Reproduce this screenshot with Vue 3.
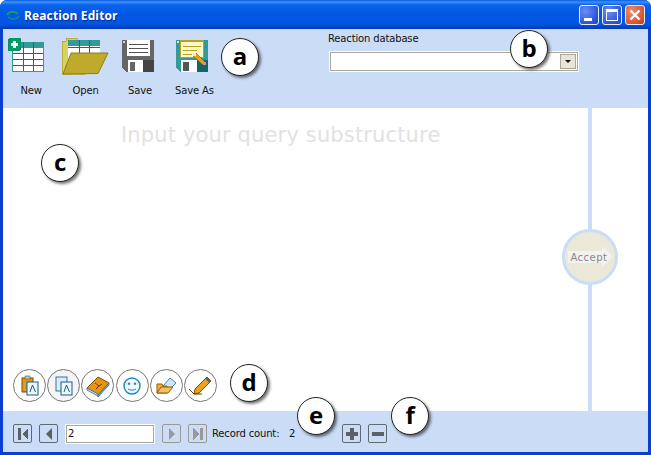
<script setup>
const callouts = [
  { letter: 'a', x: 240, y: 57 },
  { letter: 'b', x: 529, y: 49 },
  { letter: 'c', x: 60, y: 163 },
  { letter: 'd', x: 249, y: 383 },
  { letter: 'e', x: 316, y: 416 },
  { letter: 'f', x: 410, y: 416 }
]
const calloutStyle = (c) => ({ left: c.x - 19 + 'px', top: c.y - 19 + 'px' })
</script>

<template>
  <div class="window">
    <header class="titlebar">
      <svg class="app-icon" width="14" height="12" viewBox="0 0 14 12">
        <path d="M1 5C3 1 9 1 12 4" fill="none" stroke="#19a05a" stroke-width="1.6" />
        <path d="M2 7C5 10 10 10 13 6" fill="none" stroke="#0c8c9c" stroke-width="1.6" />
      </svg>
      <span class="title">Reaction Editor</span>
      <div class="win-buttons">
        <div class="win-btn"><span class="glyph-min"></span></div>
        <div class="win-btn"><span class="glyph-max"></span></div>
        <div class="win-btn close">
          <svg width="12" height="12" viewBox="0 0 12 12"><path d="M1.5 1.5L10.5 10.5M10.5 1.5L1.5 10.5" stroke="#fff" stroke-width="2.4" /></svg>
        </div>
      </div>
    </header>

    <div class="client">
      <section class="toolbar">
        <div class="tools">
          <div class="tool">
            <svg width="54" height="44" viewBox="4 34 54 44" shape-rendering="crispEdges">
              <rect x="12" y="42" width="32" height="30" fill="#339999" />
              <rect x="13" y="48" width="30" height="23" fill="#fff" />
              <path d="M13 53.5H43M13 59.5H43M13 65.5H43M23.5 48V71M33.5 48V71M23.5 42V48M33.5 42V48" stroke="#555" stroke-width="1" />
              <rect x="8" y="38" width="13" height="13" rx="2" fill="#009966" />
              <path d="M13 41H16V43H18V46H16V48H13V46H11V43H13Z" fill="#fff" />
            </svg>
            <span>New</span>
          </div>
          <div class="tool">
            <svg width="54" height="44" viewBox="58 34 54 44" shape-rendering="crispEdges">
              <path d="M61 41H65V38H76V41H84V74H61Z" fill="#d8d060" stroke="#a89a20" stroke-width="0.6" />
              <rect x="67" y="40" width="32" height="24" fill="#fff" />
              <rect x="67" y="40" width="32" height="6" fill="#339999" />
              <path d="M78.5 40V54M88.5 40V54M67 47H99" stroke="#555" stroke-width="1" />
              <path d="M62 74L70 53H107L97 73.5Z" fill="#c0aa2c" stroke="#8d7c14" stroke-width="1" shape-rendering="auto" />
            </svg>
            <span>Open</span>
          </div>
          <div class="tool">
            <svg width="54" height="44" viewBox="113 34 54 44" shape-rendering="crispEdges">
              <path d="M122 40H154V72H126L122 68Z" fill="#666" />
              <rect x="123" y="41" width="2" height="2" fill="#cfd8e8" />
              <rect x="127" y="40" width="23" height="16" fill="#fff" />
              <path d="M129 44.5H148M129 48.5H148M129 52.5H148" stroke="#555" stroke-width="1" />
              <rect x="128" y="60" width="21" height="12" fill="#fff" />
              <rect x="130" y="62" width="5" height="9" fill="#666" />
              <rect x="143" y="60" width="11" height="12" fill="#444" />
            </svg>
            <span>Save</span>
          </div>
          <div class="tool">
            <svg width="54" height="44" viewBox="167 34 54 44" shape-rendering="crispEdges">
              <path d="M176 40H208V72H180L176 68Z" fill="#339999" />
              <rect x="177" y="41" width="2" height="2" fill="#cfe8e8" />
              <rect x="180" y="40" width="24" height="18" fill="#b8a020" />
              <rect x="181" y="42" width="22" height="15" fill="#fff8c8" />
              <path d="M183 46.5H201M183 50.5H197M183 54.5H192" stroke="#b8a020" stroke-width="1" />
              <rect x="181" y="60" width="18" height="12" fill="#fff" />
              <rect x="183" y="62" width="6" height="9" fill="#555" />
              <rect x="197" y="60" width="11" height="12" fill="#116666" />
              <path d="M193 56L196 53L205 62L203 65Z" fill="#e8a020" stroke="#555" stroke-width="0.6" shape-rendering="auto" />
              <rect x="193" y="53" width="3" height="3" fill="#eee" />
              <rect x="203" y="62" width="3" height="3" fill="#f08090" />
            </svg>
            <span>Save As</span>
          </div>
        </div>
        <div class="database">
          <label>Reaction database</label>
          <div class="combo"><div class="combo-btn"><i></i></div></div>
        </div>
      </section>

      <main class="main">
        <div class="canvas">
          <p class="placeholder">Input your query substructure</p>
          <div class="actions">
            <div class="action">
              <svg width="22" height="22" viewBox="0 0 22 22">
                <rect x="3" y="3" width="11" height="14" fill="#e09a20" stroke="#7a4a08" />
                <rect x="6" y="1" width="5" height="3" fill="#c9c0a8" stroke="#6a5a30" stroke-width=".6" />
                <rect x="8" y="7" width="11" height="13" fill="#eef6fb" stroke="#0f5f8f" />
                <path d="M13.5 10L11 17M13.5 10L16.5 17" stroke="#0f5f8f" fill="none" />
              </svg>
            </div>
            <div class="action shade">
              <svg width="22" height="22" viewBox="0 0 22 22">
                <rect x="3" y="2" width="11" height="14" fill="#dcebf4" stroke="#2a7aa5" />
                <rect x="8" y="7" width="11" height="13" fill="#eef6fb" stroke="#0f5f8f" />
                <path d="M13.5 10L11 17M13.5 10L16.5 17" stroke="#0f5f8f" fill="none" />
              </svg>
            </div>
            <div class="action">
              <svg width="24" height="22" viewBox="0 0 24 22">
                <path d="M1 13L12 2L23 8L12 20Z" fill="#e8960f" stroke="#7a4a08" />
                <path d="M1 13L1 15L12 21L12 19Z" fill="#cfe4f4" stroke="#2a6a95" stroke-width=".8" />
                <path d="M12 20V22L23 10V8Z" fill="#7fb0d8" stroke="#2a6a95" stroke-width=".8" />
                <path d="M9 8L13 11M13 11L10 14M13 11L16 9" stroke="#6a3a04" fill="none" />
              </svg>
            </div>
            <div class="action">
              <svg width="22" height="22" viewBox="0 0 22 22">
                <circle cx="11" cy="11" r="8" fill="#eef8fd" stroke="#1a8ac0" stroke-width="1.4" />
                <path d="M8 7.5V10M6.8 8.8H9.2M14 7.5V10M12.8 8.8H15.2" stroke="#0f5f8f" stroke-width=".9" />
                <path d="M7 14C9 15.5 13 15.5 15 14" fill="none" stroke="#1a8ac0" />
              </svg>
            </div>
            <div class="action">
              <svg width="24" height="22" viewBox="0 0 24 22">
                <path d="M9 11L16 3L22 8L15 15Z" fill="#cfe8f8" stroke="#3a8ab8" />
                <path d="M3 9H8L9 11H13V18H3Z" fill="#f0b040" stroke="#8a5a0c" />
                <path d="M3 18L7 12H19L14 18Z" fill="#f3c060" stroke="#8a5a0c" />
              </svg>
            </div>
            <div class="action">
              <svg width="24" height="24" viewBox="0 0 24 24">
                <path d="M7 15L19 3L23 7L11 19L6 20Z" fill="#eda21a" stroke="#7a4a08" />
                <path d="M18 4L22 8" stroke="#3a6a95" stroke-width="2.4" />
                <path d="M1 15L6 20L14 20" fill="none" stroke="#6a3a04" />
              </svg>
            </div>
          </div>
        </div>
        <div class="divider"></div>
        <div class="side"></div>
        <div class="accept">
          <svg class="accept-arrow" width="46" height="22" viewBox="0 0 46 22"><path d="M0 5H34V0L45 11L34 21V17H0Z" fill="#f3f2ee" /></svg>
          <span>Accept</span>
        </div>
      </main>

      <footer class="footer">
        <div class="nav-btn">
          <svg width="12" height="12" viewBox="0 0 12 12" shape-rendering="crispEdges"><path d="M1 0H4V12H1ZM11 0V12L5 6Z" fill="#5a6268" /></svg>
        </div>
        <div class="nav-btn">
          <svg width="12" height="12" viewBox="0 0 12 12"><path d="M9 0V12L3 6Z" fill="#5a6268" /></svg>
        </div>
        <input class="record" value="2" />
        <div class="nav-btn off">
          <svg width="12" height="12" viewBox="0 0 12 12"><path d="M3 0V12L9 6Z" fill="#999" /></svg>
        </div>
        <div class="nav-btn off">
          <svg width="12" height="12" viewBox="0 0 12 12" shape-rendering="crispEdges"><path d="M8 0H11V12H8ZM1 0V12L7 6Z" fill="#999" /></svg>
        </div>
        <span class="count-label">Record count:</span>
        <span class="count">2</span>
        <div class="nav-btn">
          <svg width="14" height="14" viewBox="0 0 14 14" shape-rendering="crispEdges"><path d="M5 1H9V5H13V9H9V13H5V9H1V5H5Z" fill="#5a6268" /></svg>
        </div>
        <div class="nav-btn">
          <svg width="14" height="14" viewBox="0 0 14 14" shape-rendering="crispEdges"><path d="M1 5H13V9H1Z" fill="#5a6268" /></svg>
        </div>
      </footer>
    </div>

    <div v-for="c in callouts" :key="c.letter" class="callout" :style="calloutStyle(c)">{{ c.letter }}</div>
  </div>
</template>

<style scoped>
.window {
  position: relative;
  width: 651px;
  height: 455px;
  display: flex;
  flex-direction: column;
  border-radius: 7px 7px 0 0;
  overflow: hidden;
  font-family: "DejaVu Sans", sans-serif;
  font-size: 10px;
  letter-spacing: -0.15px;
  color: #111;
  background: #0a3fd0;
}
.titlebar {
  height: 29px;
  flex: none;
  display: flex;
  align-items: center;
  padding: 0 6px;
  box-sizing: border-box;
  background: linear-gradient(#0a5ce0 0, #3d90fa 2px, #0a62ec 5px, #0258e4 14px, #0255e0 24px, #0346cc 27px, #0236b4 29px);
}
.app-icon { margin-top: 3px; }
.title {
  margin: 2px 0 0 4px;
  font-family: "Open Sans", sans-serif;
  font-weight: 700;
  font-size: 12px;
  letter-spacing: 0.12px;
  color: #fff;
  text-shadow: 1px 1px 1px #0a2a90;
}
.win-buttons {
  margin-left: auto;
  display: flex;
  gap: 3px;
}
.win-btn {
  width: 20px;
  height: 20px;
  box-sizing: border-box;
  border: 1px solid #e8eefc;
  border-radius: 3px;
  background: radial-gradient(circle at 30% 30%, #6c8ff0, #2a55dc 70%, #2046c0);
  display: flex;
  align-items: center;
  justify-content: center;
  position: relative;
}
.win-btn.close { background: radial-gradient(circle at 30% 30%, #ef8a66, #d9552e 70%, #b83c1c); }
.glyph-min { width: 8px; height: 3px; background: #fff; position: absolute; left: 4px; bottom: 3px; }
.glyph-max { width: 12px; height: 12px; box-sizing: border-box; border: 1px solid #fff; border-top-width: 3px; }

.client {
  flex: 1;
  min-height: 0;
  margin: 0 3px 3px;
  display: flex;
  flex-direction: column;
  background: #cbdcf6;
}
.toolbar {
  height: 79px;
  flex: none;
  display: flex;
}
.tools {
  display: flex;
  margin-left: 1px;
  width: 324px;
  padding-top: 5px;
  box-sizing: border-box;
}
.tool {
  width: 54.4px;
  display: flex;
  flex-direction: column;
  align-items: center;
  height: 74px;
}
.tool svg { display: block; }
.tool span { margin-top: 7px; line-height: 12px; white-space: nowrap; }
.database { padding-top: 4px; }
.database label { display: block; line-height: 12px; }
.combo {
  width: 248px;
  height: 19px;
  margin: 7px 0 0 2px;
  box-sizing: border-box;
  border: 1px solid #aca899;
  outline: 1px solid #fff;
  background: #fff;
  display: flex;
  justify-content: flex-end;
  align-items: center;
  padding-right: 1px;
}
.combo-btn {
  width: 16px;
  height: 15px;
  box-sizing: border-box;
  border: 1px solid #aca899;
  background: #e8e6d6;
  display: flex;
  align-items: center;
  justify-content: center;
}
.combo-btn i {
  width: 0;
  height: 0;
  border: 3px solid transparent;
  border-top: 3px solid #111;
  border-bottom: 0;
}

.main {
  height: 303px;
  flex: none;
  display: flex;
  position: relative;
  background: #fff;
}
.canvas {
  flex: 1;
  display: flex;
  flex-direction: column;
  justify-content: space-between;
}
.placeholder {
  margin: 14px 0 0 118px;
  font-size: 21px;
  letter-spacing: 0.15px;
  line-height: 26px;
  color: #e2e2e2;
}
.actions {
  display: flex;
  gap: 1.2px;
  margin: 0 0 9px 10px;
}
.action {
  width: 33px;
  height: 33px;
  box-sizing: border-box;
  border: 1.5px solid #777;
  border-radius: 50%;
  background: #fff;
  display: flex;
  align-items: center;
  justify-content: center;
}
.action.shade { background: #f4f4f4; }
.divider { width: 4px; background: #cbdcf6; }
.side { width: 56px; }
.accept {
  position: absolute;
  left: 559px;
  top: 121px;
  width: 56px;
  height: 56px;
  box-sizing: border-box;
  border: 3px solid #cbdcf6;
  border-radius: 50%;
  background: #ebe8da;
  display: flex;
  align-items: center;
  justify-content: center;
  color: #888;
}
.accept-arrow { position: absolute; left: 3px; top: 14px; }
.accept span { position: relative; letter-spacing: 0.5px; left: -1px; }

.footer {
  flex: 1;
  display: flex;
  align-items: center;
  gap: 7px;
  padding: 4px 0 0 10px;
}
.nav-btn {
  width: 19px;
  height: 19px;
  box-sizing: border-box;
  border: 1px solid #5f6a70;
  border-radius: 2px;
  display: flex;
  align-items: center;
  justify-content: center;
  flex: none;
}
.nav-btn.off { border-color: #999; }
.record {
  width: 88px;
  height: 18px;
  margin: 0 1px;
  box-sizing: border-box;
  border: 1px solid #aca899;
  padding: 0 1px;
  font: 10px "DejaVu Sans", sans-serif;
  color: #111;
  background: #fff;
  outline: 1px solid #fff;
}
.count-label { margin-left: -2px; width: 70px; white-space: nowrap; }
.count { width: 46px; }
.callout {
  position: absolute;
  width: 38px;
  height: 38px;
  box-sizing: border-box;
  border: 1.5px solid #222;
  border-radius: 50%;
  background: #fff;
  box-shadow: 2px 2px 3px rgba(0, 0, 0, 0.55);
  display: flex;
  align-items: center;
  justify-content: center;
  font: 700 24px "Open Sans", sans-serif;
  color: #000;
  padding-bottom: 3px;
}
</style>
